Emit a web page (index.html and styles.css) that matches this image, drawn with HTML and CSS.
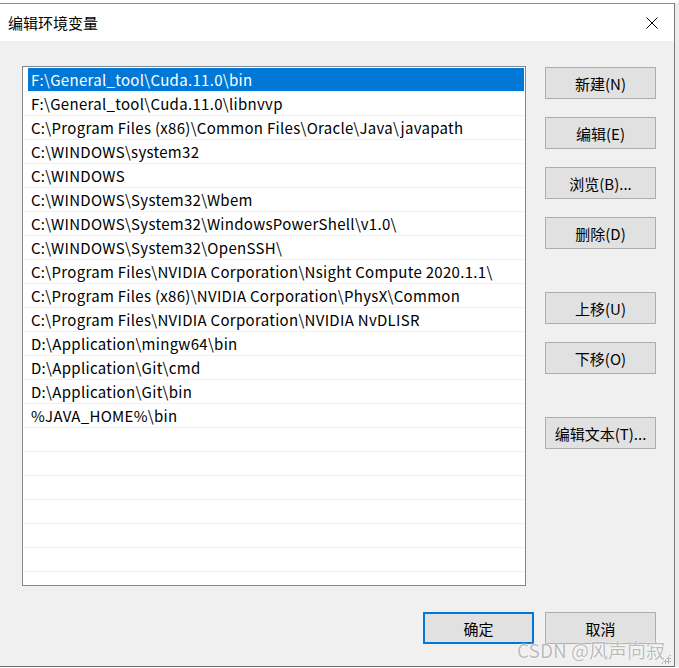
FILE: index.html
```html
<!DOCTYPE html>
<html lang="zh-CN">
<head>
  <meta charset="UTF-8">
  <title>编辑环境变量</title>
  <link rel="stylesheet" href="styles.css">
</head>
<body>
  <div class="window">
    <div class="titlebar">
      <span class="title">编辑环境变量</span>
      <svg class="close" width="12" height="12" viewBox="0 0 12 12">
        <path d="M0.5 0.5 L11.5 11.5 M11.5 0.5 L0.5 11.5" stroke="#000" stroke-width="1" fill="none"/>
      </svg>
    </div>

    <div class="content">
      <div class="main">
        <div class="listbox">
          <div class="row selected"><span class="cell">F:\General_tool\Cuda.11.0\bin</span></div>
          <div class="row"><span class="cell">F:\General_tool\Cuda.11.0\libnvvp</span></div>
          <div class="row"><span class="cell">C:\Program Files (x86)\Common Files\Oracle\Java\javapath</span></div>
          <div class="row"><span class="cell">C:\WINDOWS\system32</span></div>
          <div class="row"><span class="cell">C:\WINDOWS</span></div>
          <div class="row"><span class="cell">C:\WINDOWS\System32\Wbem</span></div>
          <div class="row"><span class="cell">C:\WINDOWS\System32\WindowsPowerShell\v1.0\</span></div>
          <div class="row"><span class="cell">C:\WINDOWS\System32\OpenSSH\</span></div>
          <div class="row"><span class="cell">C:\Program Files\NVIDIA Corporation\Nsight Compute 2020.1.1\</span></div>
          <div class="row"><span class="cell">C:\Program Files (x86)\NVIDIA Corporation\PhysX\Common</span></div>
          <div class="row"><span class="cell">C:\Program Files\NVIDIA Corporation\NVIDIA NvDLISR</span></div>
          <div class="row"><span class="cell">D:\Application\mingw64\bin</span></div>
          <div class="row"><span class="cell">D:\Application\Git\cmd</span></div>
          <div class="row"><span class="cell">D:\Application\Git\bin</span></div>
          <div class="row"><span class="cell">%JAVA_HOME%\bin</span></div>
          <div class="row"><span class="cell"></span></div>
          <div class="row"><span class="cell"></span></div>
          <div class="row"><span class="cell"></span></div>
          <div class="row"><span class="cell"></span></div>
          <div class="row"><span class="cell"></span></div>
          <div class="row"><span class="cell"></span></div>
          <div class="row"><span class="cell"></span></div>
        </div>

        <div class="actions">
          <button class="btn">新建(N)</button>
          <button class="btn">编辑(E)</button>
          <button class="btn">浏览(B)...</button>
          <button class="btn">删除(D)</button>
          <button class="btn spaced">上移(U)</button>
          <button class="btn">下移(O)</button>
          <button class="btn spaced">编辑文本(T)...</button>
        </div>
      </div>

      <div class="footer">
        <button class="btn default">确定</button>
        <button class="btn">取消</button>
      </div>
    </div>

    <div class="watermark">CSDN @风声向寂</div>
    <div class="grip"></div>
  </div>
</body>
</html>
```

FILE: styles.css
```css
/* Windows dialog look */
body {
  margin: 0;
  padding: 0;
  background: linear-gradient(#fff 0 3px, #ececec 3px);
  font-family: "Noto Sans CJK SC", sans-serif;
}
.window {
  position: relative;
  width: 674px;
  height: 662px;
  margin-top: 3px;
  border-top: 1px solid #8c8c8c;
  border-right: 1px solid #7a7a7a;
  border-bottom: 1px solid #6b6b6b;
  background-color: #f0f0f0;
  display: flex;
  flex-direction: column;
}
.titlebar {
  height: 37px;
  background-color: #fff;
  display: flex;
  align-items: center;
  justify-content: space-between;
  padding: 0 16px 0 8px;
}
.title {
  font-size: 15px;
  color: #000;
}
.content {
  flex: 1;
  padding: 25px 18px 0 22px;
  display: flex;
  flex-direction: column;
}
.main {
  display: flex;
  gap: 19px;
}
.listbox {
  box-sizing: border-box;
  width: 504px;
  height: 520px;
  border: 1px solid #828790;
  background-color: #fff;
  padding: 1px 1px 0;
  overflow: hidden;
}
.row {
  box-sizing: border-box;
  height: 24px;
  border-bottom: 1px solid #f0f0f0;
  padding-left: 4px;
  display: flex;
}
.cell {
  flex: 1;
  padding-left: 3px;
  line-height: 23px;
  font-size: 15px;
  letter-spacing: 0.3px;
  color: #000;
  white-space: nowrap;
}
.selected .cell {
  background-color: #0078d7;
  color: #fff;
}
.actions {
  width: 111px;
  margin-top: 1px;
  display: flex;
  flex-direction: column;
  gap: 18px;
}
.btn {
  box-sizing: border-box;
  width: 111px;
  height: 32px;
  padding: 0;
  border: 1px solid #adadad;
  background-color: #e1e1e1;
  font-family: "Noto Sans CJK SC", sans-serif;
  font-size: 15px;
  color: #000;
}
.spaced {
  margin-top: 25px;
}
.footer {
  margin-top: 26px;
  display: flex;
  justify-content: flex-end;
  gap: 11px;
}
.default {
  border: 2px solid #0078d7;
}
.watermark {
  position: absolute;
  right: 9px;
  bottom: 5px;
  font-size: 19px;
  line-height: 22px;
  color: rgba(120, 120, 120, 0.5);
  text-shadow: 0 0 1px #fff, 0 0 2px #fff;
  white-space: nowrap;
}
.grip {
  position: absolute;
  right: 3px;
  bottom: 2px;
  width: 10px;
  height: 10px;
  background-image: radial-gradient(#b5b5b5 1px, transparent 1.2px);
  background-size: 3px 3px;
  clip-path: polygon(100% 0, 100% 100%, 0 100%);
}
```
